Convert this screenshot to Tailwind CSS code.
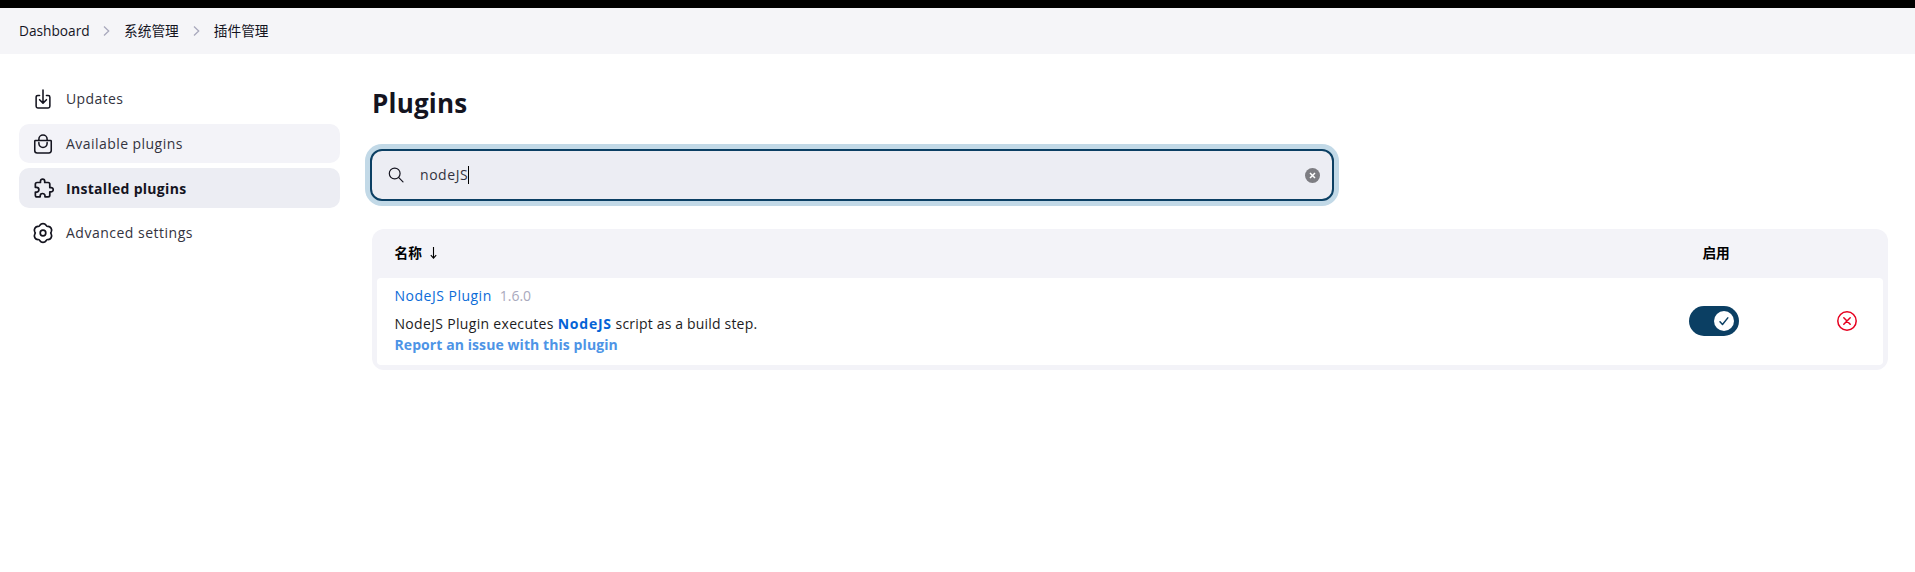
<!DOCTYPE html>
<html lang="zh-CN">
<head>
<meta charset="utf-8">
<title>Plugins</title>
<script src="https://cdn.jsdelivr.net/npm/@tailwindcss/browser@4"></script>
</head>
<body class="min-h-screen bg-white font-['Open_Sans','Noto_Sans_CJK_SC',sans-serif] text-[14px] text-[#14141f]">
<div class="h-2 bg-black"></div>
<nav class="flex h-[46px] items-center bg-[#f5f5f8] pl-[19px] text-[13.7px]">
  <span class="w-[71px] whitespace-nowrap">Dashboard</span>
  <svg class="ml-[13px] mr-[14px] h-3 w-[7px]" viewBox="0 0 7 12" fill="none" stroke="#a9a9bd" stroke-width="1.3"><path d="M1 1.5 5.7 6 1 10.5"/></svg>
  <span>系统管理</span>
  <svg class="ml-[14px] mr-[14px] h-3 w-[7px]" viewBox="0 0 7 12" fill="none" stroke="#a9a9bd" stroke-width="1.3"><path d="M1 1.5 5.7 6 1 10.5"/></svg>
  <span>插件管理</span>
</nav>
<div class="flex pl-[19px]">
  <aside class="mt-[25px] flex w-[321px] flex-col text-[#333340]">
    <a class="mb-[5px] flex h-10 items-center gap-3 rounded-[10px] pl-[13px]">
      <svg class="size-[22px] text-[#14141f]" viewBox="0 0 512 512" fill="none" stroke="currentColor" stroke-width="36" stroke-linecap="round" stroke-linejoin="round"><path d="M336 176h40a40 40 0 0140 40v208a40 40 0 01-40 40H136a40 40 0 01-40-40V216a40 40 0 0140-40h40M176 272l80 80 80-80M256 48v288"/></svg>
      <span class="pb-0.5 tracking-[0.38px]">Updates</span>
    </a>
    <a class="mb-[5px] flex h-[39px] items-center gap-3 rounded-[10px] bg-[#f3f3f8] pl-[13px]">
      <svg class="size-[22px] text-[#14141f]" viewBox="0 0 512 512" fill="none" stroke="currentColor" stroke-width="36" stroke-linecap="round" stroke-linejoin="round"><path d="M80 176a16 16 0 00-16 16v216c0 30.24 25.76 56 56 56h272c30.24 0 56-24.51 56-54.75V192a16 16 0 00-16-16zM160 176v-32a96 96 0 0196-96h0a96 96 0 0196 96v32M160 224v16a96 96 0 0096 96h0a96 96 0 0096-96v-16"/></svg>
      <span class="tracking-[0.45px]">Available plugins</span>
    </a>
    <a class="mb-[5px] flex h-[40px] items-center gap-3 rounded-[10px] bg-[#ecedf3] pl-[13px] font-bold text-[#14141f]">
      <svg class="size-[22px]" viewBox="-30 0 512 512" fill="none" stroke="currentColor" stroke-width="40" stroke-linejoin="round"><path d="M413.66 246.1H386a2 2 0 01-2-2v-77.76A38.34 38.34 0 00345.66 128H267.9a2 2 0 01-2-2V98.34c0-27.14-21.5-49.86-48.64-50.33a49.53 49.53 0 00-50.4 49.51V126a2 2 0 01-2 2H87.62A39.74 39.74 0 0048 167.62V238a2 2 0 002 2h26.91c29.37 0 53.68 25.48 54.09 54.85.42 29.87-23.51 57.15-53.29 57.15H50a2 2 0 00-2 2v70.38A39.74 39.74 0 0087.62 464H158a2 2 0 002-2v-20.93c0-30.28 24.75-56.35 55-57.06 30.1-.7 57 20.31 57 50.28V462a2 2 0 002 2h71.14A38.86 38.86 0 00384 425.14v-78a2 2 0 012-2h28.48c27.63 0 49.52-22.67 49.52-50.4s-23.2-48.64-50.34-48.64z"/></svg>
      <span class="tracking-[0.3px]">Installed plugins</span>
    </a>
    <a class="flex h-10 items-center gap-3 rounded-[10px] pl-[13px]">
      <svg class="size-[22px] text-[#14141f]" viewBox="1 1 22 22" fill="none" stroke="currentColor" stroke-width="1.7" stroke-linejoin="round"><path d="M8.9 4.3A3.7 3.7 0 0 1 15.1 4.3A1.8 1.8 0 0 0 17.1 5.46A3.7 3.7 0 0 1 20.22 10.84A1.8 1.8 0 0 0 20.22 13.16A3.7 3.7 0 0 1 17.1 18.54A1.8 1.8 0 0 0 15.1 19.7A3.7 3.7 0 0 1 8.9 19.7A1.8 1.8 0 0 0 6.9 18.54A3.7 3.7 0 0 1 3.78 13.16A1.8 1.8 0 0 0 3.78 10.84A3.7 3.7 0 0 1 6.9 5.46A1.8 1.8 0 0 0 8.9 4.3Z"/><circle cx="12" cy="12" r="2.8"/></svg>
      <span class="pb-0.5 tracking-[0.5px]">Advanced settings</span>
    </a>
  </aside>
  <main class="ml-[32px] w-[1516px]">
    <h1 class="mt-[30px] h-[40px] text-[26px] leading-[38px] font-bold tracking-[0.2px]">Plugins</h1>
    <div class="mt-[25px] -ml-[2px] flex h-[52px] w-[964px] items-center rounded-[12px] border-2 border-[#0b3f63] bg-[#ecedf3] pr-3 pl-[16px] ring-5 ring-[#c2d9e7]">
      <svg class="size-4" viewBox="0 0 16 16" fill="none" stroke="currentColor" stroke-width="1.2" stroke-linecap="round"><circle cx="6.7" cy="6.5" r="5.4"/><path d="m10.8 10.6 4.2 4.2"/></svg>
      <span class="ml-4 pb-0.5 tracking-[0.55px] whitespace-nowrap text-[#333340]">nodeJS</span><span class="h-[18px] w-px bg-black"></span>
      <svg class="ml-auto size-[15px]" viewBox="0 0 15 15"><circle cx="7.5" cy="7.5" r="7.5" fill="#7d7d82"/><path d="m5 5 5 5m0-5-5 5" stroke="#fff" stroke-width="1.5"/></svg>
    </div>
    <section class="mt-[28px] h-[141px] rounded-[12px] bg-[#f3f3f8] px-[5px] pb-[5px]">
      <header class="flex h-[49px] items-center pl-[17.5px] text-[13.7px] font-bold text-black">
        <span>名称</span>
        <svg class="mb-px ml-[8px] h-3 w-[7px]" viewBox="0 0 7 12" fill="none" stroke="currentColor" stroke-width="1.1"><path d="M3.5 0v11M.8 8.2l2.7 2.9 2.7-2.9"/></svg>
        <span class="ml-[1265.5px]">启用</span>
      </header>
      <div class="flex h-[87px] items-center rounded bg-white pb-px pl-[17.5px]">
        <div class="w-[1294.5px] self-start pt-[6px]">
          <div class="flex h-[22px] items-center gap-2"><a class="tracking-[0.5px] text-[#0b6bd8]">NodeJS Plugin</a><span class="text-[#a9a9bd]">1.6.0</span></div>
          <div class="mt-[7px] h-[21px] leading-[21px] tracking-[0.32px] whitespace-nowrap text-[#1c1c22]">NodeJS Plugin executes <b class="tracking-[0.75px] text-[#0463d6]">NodeJS</b><span class="tracking-[0.18px]"> script as a build step.</span></div>
          <a class="block h-[21px] leading-[21px] font-bold tracking-[0.08px] text-[#4d94e6]">Report an issue with this plugin</a>
        </div>
        <div class="flex h-[30px] w-[50px] items-center justify-end rounded-full bg-[#0b3f63] pr-[5px]">
          <svg class="size-5" viewBox="0 0 20 20" fill="none"><circle cx="10" cy="10" r="10" fill="#fff"/><path d="m6 10.8 2.5 2.7 5.3-6.6" stroke="#0b3f63" stroke-width="1.5" stroke-linecap="round" stroke-linejoin="round"/></svg>
        </div>
        <svg class="ml-[98px] size-5" viewBox="0 0 20 20" fill="none" stroke="#e6001f" stroke-width="1.5" stroke-linecap="round"><circle cx="10" cy="10" r="9.2"/><path d="m6.8 6.8 6.4 6.4m0-6.4-6.4 6.4"/></svg>
      </div>
    </section>
  </main>
</div>
</body>
</html>
